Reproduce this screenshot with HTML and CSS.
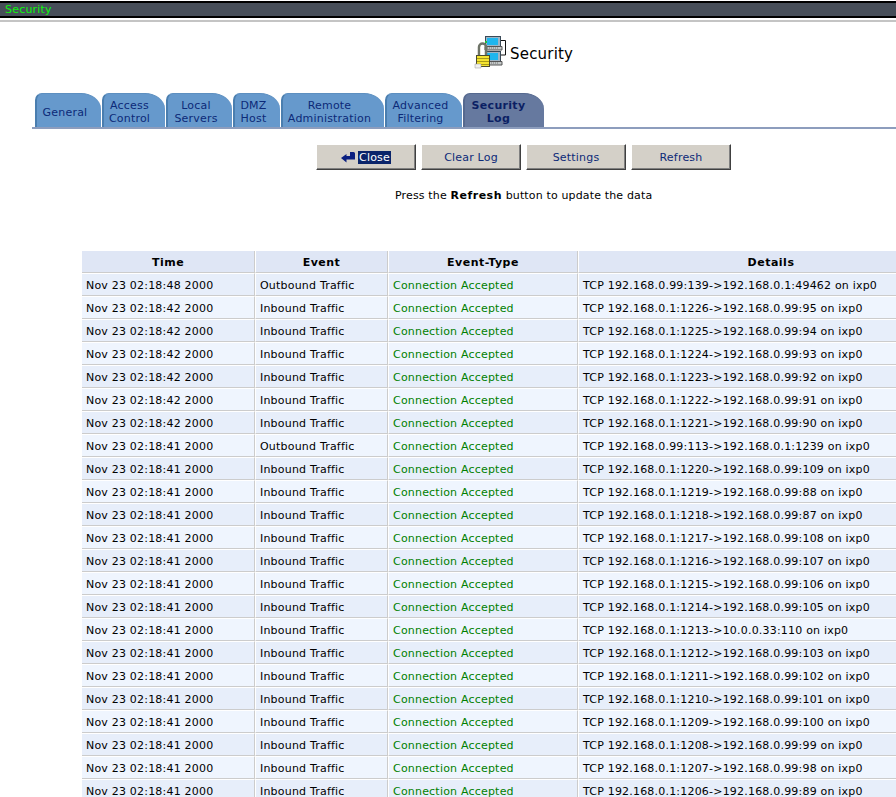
FILE: index.html
```html
<!DOCTYPE html>
<html lang="en">
<head>
<meta charset="utf-8">
<title>Security</title>
<link rel="stylesheet" href="styles.css">
</head>
<body>
<div class="titlebar"><span>Security</span></div>
<div class="titlerule"></div>
<div class="heading">
  <svg class="heading-icon" width="34" height="34" viewBox="0 0 34 34" aria-hidden="true">
    <path d="M27 4.500h4.500v14.500H27" fill="none" stroke="#111"/>
    <rect x="11.500" y="0.500" width="15" height="10" fill="#9fb4c4" stroke="#3a4a58"/>
    <rect x="13" y="2" width="11" height="7" fill="#1fb6ee"/>
    <path d="M11 10.500h17v3.500H11z" fill="#c4c8c8" stroke="#555"/>
    <path d="M13 12h12" stroke="#777" stroke-dasharray="1 1"/>
    <rect x="11.500" y="15.500" width="15" height="10" fill="#9fb4c4" stroke="#3a4a58"/>
    <rect x="13" y="17" width="11" height="7" fill="#1fb6ee"/>
    <path d="M11 25.500h17v3.500H11z" fill="#c4c8c8" stroke="#555"/>
    <path d="M13 27h12" stroke="#777" stroke-dasharray="1 1"/>
    <rect x="11" y="5" width="2" height="2" fill="#20c040"/>
    <path d="M5 19v-8a3.500 3.500 0 0 1 7 0v8" fill="none" stroke="#6f7468" stroke-width="2.500"/>
    <path d="M6.500 19v-8" stroke="#e8e8d8"/>
    <rect x="2.500" y="19.500" width="13" height="11" fill="#f5e430" stroke="#4a4a30"/>
    <path d="M3 22.500h12M3 25.500h12M3 28.500h12" stroke="#a89a18"/>
    <path d="M1 28h6v4H1z" fill="#f0f0f0" stroke="#999" stroke-width=".5"/>
  </svg>
  <span>Security</span>
</div>
<nav class="tabs">
  <a class="tab w-general">General</a>
  <a class="tab w-access">Access<br>Control</a>
  <a class="tab w-local">Local<br>Servers</a>
  <a class="tab w-dmz">DMZ<br>Host</a>
  <a class="tab w-remote">Remote<br>Administration</a>
  <a class="tab w-adv">Advanced<br>Filtering</a>
  <a class="tab tab-active w-log">Security<br>Log</a>
</nav>
<div class="buttons">
  <button class="btn"><svg class="btn-icon" width="14" height="11" viewBox="0 0 14 11" aria-hidden="true"><path d="M9 0h3.500q1.500 0 1.500 1.500V7.500H5.500V10.500L0 6 5.500 2V4H9z" fill="#0a1f80"/></svg><span class="sel">Close</span></button>
  <button class="btn">Clear Log</button>
  <button class="btn">Settings</button>
  <button class="btn">Refresh</button>
</div>
<p class="hint">Press the <b>Refresh</b> button to update the data</p>
<div class="log-wrap">
<table class="log">
  <colgroup><col class="c1"><col class="c2"><col class="c3"><col class="c4"></colgroup>
  <thead><tr><th>Time</th><th>Event</th><th>Event-Type</th><th>Details</th></tr></thead>
  <tbody id="rows">
    <tr><td>Nov 23 02:18:48 2000</td><td>Outbound Traffic</td><td class="ok">Connection Accepted</td><td>TCP 192.168.0.99:139-&gt;192.168.0.1:49462 on ixp0</td></tr>
    <tr><td>Nov 23 02:18:42 2000</td><td>Inbound Traffic</td><td class="ok">Connection Accepted</td><td>TCP 192.168.0.1:1226-&gt;192.168.0.99:95 on ixp0</td></tr>
    <tr><td>Nov 23 02:18:42 2000</td><td>Inbound Traffic</td><td class="ok">Connection Accepted</td><td>TCP 192.168.0.1:1225-&gt;192.168.0.99:94 on ixp0</td></tr>
    <tr><td>Nov 23 02:18:42 2000</td><td>Inbound Traffic</td><td class="ok">Connection Accepted</td><td>TCP 192.168.0.1:1224-&gt;192.168.0.99:93 on ixp0</td></tr>
    <tr><td>Nov 23 02:18:42 2000</td><td>Inbound Traffic</td><td class="ok">Connection Accepted</td><td>TCP 192.168.0.1:1223-&gt;192.168.0.99:92 on ixp0</td></tr>
    <tr><td>Nov 23 02:18:42 2000</td><td>Inbound Traffic</td><td class="ok">Connection Accepted</td><td>TCP 192.168.0.1:1222-&gt;192.168.0.99:91 on ixp0</td></tr>
    <tr><td>Nov 23 02:18:42 2000</td><td>Inbound Traffic</td><td class="ok">Connection Accepted</td><td>TCP 192.168.0.1:1221-&gt;192.168.0.99:90 on ixp0</td></tr>
    <tr><td>Nov 23 02:18:41 2000</td><td>Outbound Traffic</td><td class="ok">Connection Accepted</td><td>TCP 192.168.0.99:113-&gt;192.168.0.1:1239 on ixp0</td></tr>
    <tr><td>Nov 23 02:18:41 2000</td><td>Inbound Traffic</td><td class="ok">Connection Accepted</td><td>TCP 192.168.0.1:1220-&gt;192.168.0.99:109 on ixp0</td></tr>
    <tr><td>Nov 23 02:18:41 2000</td><td>Inbound Traffic</td><td class="ok">Connection Accepted</td><td>TCP 192.168.0.1:1219-&gt;192.168.0.99:88 on ixp0</td></tr>
    <tr><td>Nov 23 02:18:41 2000</td><td>Inbound Traffic</td><td class="ok">Connection Accepted</td><td>TCP 192.168.0.1:1218-&gt;192.168.0.99:87 on ixp0</td></tr>
    <tr><td>Nov 23 02:18:41 2000</td><td>Inbound Traffic</td><td class="ok">Connection Accepted</td><td>TCP 192.168.0.1:1217-&gt;192.168.0.99:108 on ixp0</td></tr>
    <tr><td>Nov 23 02:18:41 2000</td><td>Inbound Traffic</td><td class="ok">Connection Accepted</td><td>TCP 192.168.0.1:1216-&gt;192.168.0.99:107 on ixp0</td></tr>
    <tr><td>Nov 23 02:18:41 2000</td><td>Inbound Traffic</td><td class="ok">Connection Accepted</td><td>TCP 192.168.0.1:1215-&gt;192.168.0.99:106 on ixp0</td></tr>
    <tr><td>Nov 23 02:18:41 2000</td><td>Inbound Traffic</td><td class="ok">Connection Accepted</td><td>TCP 192.168.0.1:1214-&gt;192.168.0.99:105 on ixp0</td></tr>
    <tr><td>Nov 23 02:18:41 2000</td><td>Inbound Traffic</td><td class="ok">Connection Accepted</td><td>TCP 192.168.0.1:1213-&gt;10.0.0.33:110 on ixp0</td></tr>
    <tr><td>Nov 23 02:18:41 2000</td><td>Inbound Traffic</td><td class="ok">Connection Accepted</td><td>TCP 192.168.0.1:1212-&gt;192.168.0.99:103 on ixp0</td></tr>
    <tr><td>Nov 23 02:18:41 2000</td><td>Inbound Traffic</td><td class="ok">Connection Accepted</td><td>TCP 192.168.0.1:1211-&gt;192.168.0.99:102 on ixp0</td></tr>
    <tr><td>Nov 23 02:18:41 2000</td><td>Inbound Traffic</td><td class="ok">Connection Accepted</td><td>TCP 192.168.0.1:1210-&gt;192.168.0.99:101 on ixp0</td></tr>
    <tr><td>Nov 23 02:18:41 2000</td><td>Inbound Traffic</td><td class="ok">Connection Accepted</td><td>TCP 192.168.0.1:1209-&gt;192.168.0.99:100 on ixp0</td></tr>
    <tr><td>Nov 23 02:18:41 2000</td><td>Inbound Traffic</td><td class="ok">Connection Accepted</td><td>TCP 192.168.0.1:1208-&gt;192.168.0.99:99 on ixp0</td></tr>
    <tr><td>Nov 23 02:18:41 2000</td><td>Inbound Traffic</td><td class="ok">Connection Accepted</td><td>TCP 192.168.0.1:1207-&gt;192.168.0.99:98 on ixp0</td></tr>
    <tr><td>Nov 23 02:18:41 2000</td><td>Inbound Traffic</td><td class="ok">Connection Accepted</td><td>TCP 192.168.0.1:1206-&gt;192.168.0.99:89 on ixp0</td></tr>
  </tbody>
</table>
</div>
</body>
</html>
```
FILE: styles.css
```css
html, body { margin: 0; padding: 0; height: 797px; overflow: hidden; background: #fff; }
body { font-family: "DejaVu Sans", Verdana, sans-serif; font-size: 11px; letter-spacing: 0.2px; color: #000; width: 896px; }
.titlebar { height: 13px; margin-top: 1px; background: #474e59; border-top: 2px solid #000; border-bottom: 2px solid #000; color: #0cf50c; line-height: 13px; padding-left: 5px; }
.titlerule { height: 2px; margin-top: 2px; background: #c4c4c4; }
.heading { display: flex; align-items: center; gap: 2px; margin-top: 13px; height: 36px; padding-left: 474px; font-size: 15px; letter-spacing: 0.2px; }
.heading span { padding-top: 2px; }
.tabs { display: flex; margin: 22px 0 0 32px; height: 34px; padding-left: 3px; border-bottom: 2px solid #8d9dbd; align-items: flex-end; gap: 1px; color: #0c2a78; }
.tab { display: flex; align-items: center; justify-content: center; text-align: center; height: 34px; line-height: 13px; background: #6699cc; border-radius: 7px 20px 0 0 / 7px 16px 0 0; border-left: 2px solid #4a7eaf; border-top: 1px solid #5d8fc0; box-sizing: border-box; padding: 3px 8px 0 0; }
.tab-active { background: #66799f; border-left-color: #56698f; border-top-color: #56698f; color: #0b1f64; font-weight: bold; letter-spacing: 0.3px; padding-right: 12px; }
.w-general { width: 66px; }
.w-access { width: 63px; padding-right: 10px; }
.w-local { width: 66px; }
.w-dmz { width: 47px; }
.w-remote { width: 103px; }
.w-adv { width: 77px; }
.w-log { width: 81px; }
.buttons { display: flex; gap: 5px; margin: 15px 0 0 316px; }
.btn { width: 100px; height: 26px; padding: 0; background: #d4d0c8; border: 1px solid; border-color: #fff #404040 #404040 #fff; box-shadow: inset -1px -1px 0 #808080; font: inherit; letter-spacing: inherit; color: #0c2a78; display: flex; align-items: center; justify-content: center; gap: 3px; }
.sel { background: #0a246a; color: #fff; padding: 0 1px; line-height: 13px; }
.hint { margin: 19px 0 0 0; padding-left: 395px; line-height: 13px; letter-spacing: 0.15px; }
.hint b { letter-spacing: 0.5px; }
.log-wrap { overflow: hidden; width: 814px; margin: 49px 0 0 82px; }
table.log { border-collapse: separate; border-spacing: 0; table-layout: fixed; width: 882px; }
.c1 { width: 173px; }
.c2 { width: 133px; }
.c3 { width: 190px; }
.c4 { width: 386px; }
.log th { height: 22px; background: #dfe6f5; font-weight: bold; letter-spacing: 0.5px; border-right: 1px solid #ccc; border-left: 1px solid #fff; border-bottom: 1px solid #ccc; padding: 1px 0 0 0; text-align: center; box-sizing: border-box; }
.log td { height: 23px; padding: 2px 0 0 4px; white-space: nowrap; border-right: 1px solid #ccc; border-left: 1px solid #fff; border-top: 1px solid #fff; border-bottom: 1px solid #ccc; box-sizing: border-box; overflow: hidden; }
.log th:first-child, .log td:first-child { border-left: 0; }
.log tbody tr:nth-child(odd) td { background: #e7eefa; }
.log tbody tr:nth-child(even) td { background: #eff5fe; }
.log td.ok { color: #008000; }
```
